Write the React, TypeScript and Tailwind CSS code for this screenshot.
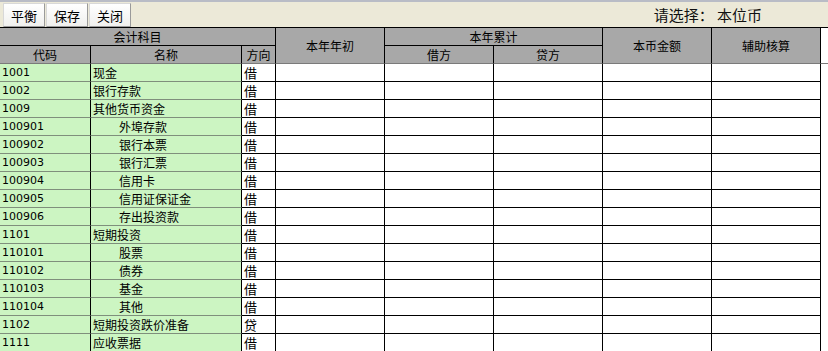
import React from "react";

interface Row {
  code: string;
  name: string;
  dir: string;
  sub?: boolean;
}

const rows: Row[] = [
  { code: "1001", name: "现金", dir: "借" },
  { code: "1002", name: "银行存款", dir: "借" },
  { code: "1009", name: "其他货币资金", dir: "借" },
  { code: "100901", name: "外埠存款", dir: "借", sub: true },
  { code: "100902", name: "银行本票", dir: "借", sub: true },
  { code: "100903", name: "银行汇票", dir: "借", sub: true },
  { code: "100904", name: "信用卡", dir: "借", sub: true },
  { code: "100905", name: "信用证保证金", dir: "借", sub: true },
  { code: "100906", name: "存出投资款", dir: "借", sub: true },
  { code: "1101", name: "短期投资", dir: "借" },
  { code: "110101", name: "股票", dir: "借", sub: true },
  { code: "110102", name: "债券", dir: "借", sub: true },
  { code: "110103", name: "基金", dir: "借", sub: true },
  { code: "110104", name: "其他", dir: "借", sub: true },
  { code: "1102", name: "短期投资跌价准备", dir: "贷" },
  { code: "1111", name: "应收票据", dir: "借" },
];

const cjk = "font-['Noto_Sans_CJK_SC',sans-serif]";
const cols = "grid grid-cols-[91px_151px_34px_109px_109px_109px_109px_109px]";

const ToolButton = ({ label }: { label: string }) => (
  <button className="h-6 w-[42px] border border-[#9a9a9a] border-t-[#d8d8d8] border-l-[#d8d8d8] bg-gradient-to-b from-white to-[#f0f0ee] text-[13px] leading-none text-black">
    {label}
  </button>
);

export default function App() {
  return (
    <div className={`w-[828px] h-[351px] overflow-hidden bg-white ${cjk}`}>
      {/* top strip */}
      <div className="h-[2px] bg-[#b9bcc6]" />

      {/* toolbar */}
      <div className="h-[25px] bg-[#ece9d8] flex items-start pl-[3px] pt-px">
        <div className="flex gap-px">
          <ToolButton label="平衡" />
          <ToolButton label="保存" />
          <ToolButton label="关闭" />
        </div>
        <div className="ml-auto mr-[66px] mt-[2px] text-[15px] leading-5 text-[#111]">
          请选择：&nbsp;本位币
        </div>
      </div>

      {/* header */}
      <div className="flex border-t border-black">
        <div className={`${cols} grid-rows-[18px_18px] bg-[#a8a8a8] text-[12px] text-black`}>
          <div className="col-span-3 border-r border-b border-black flex items-center justify-center leading-none">
            会计科目
          </div>
          <div className="row-span-2 border-r border-b border-b-[#7a7a7a] border-r-black flex items-center justify-center leading-none">
            本年年初
          </div>
          <div className="col-span-2 border-r border-b border-black flex items-center justify-center leading-none">
            本年累计
          </div>
          <div className="row-span-2 border-r border-b border-b-[#7a7a7a] border-r-black flex items-center justify-center leading-none">
            本币金额
          </div>
          <div className="row-span-2 border-r border-b border-b-[#7a7a7a] border-r-black flex items-center justify-center leading-none">
            辅助核算
          </div>
          <div className="border-r border-b border-r-black border-b-[#7a7a7a] flex items-center justify-center leading-none">
            代码
          </div>
          <div className="border-r border-b border-r-black border-b-[#7a7a7a] flex items-center justify-center leading-none">
            名称
          </div>
          <div className="border-r border-b border-r-black border-b-[#7a7a7a] flex items-center justify-center leading-none">
            方向
          </div>
          <div className="border-r border-b border-r-black border-b-[#7a7a7a] flex items-center justify-center leading-none">
            借方
          </div>
          <div className="border-r border-b border-r-black border-b-[#7a7a7a] flex items-center justify-center leading-none">
            贷方
          </div>
        </div>
        <div className="flex-1 border-b border-[#7a7a7a]" />
      </div>

      {/* body */}
      <div className="w-[821px]">
        {rows.map((r) => (
          <div key={r.code} className={`${cols} h-[18px] text-[12px] leading-none`}>
            <div className="bg-[#ccf5c2] border-r border-b border-r-black border-b-[#7f8f7c] flex items-center pl-[2px] font-['DejaVu_Sans',sans-serif] text-[11px] text-black">
              {r.code}
            </div>
            <div
              className={`bg-[#ccf5c2] border-r border-b border-r-black border-b-[#7f8f7c] flex items-center text-black ${
                r.sub ? "pl-[28px]" : "pl-[2px]"
              }`}
            >
              {r.name}
            </div>
            <div className="bg-white border-r border-b border-black flex items-center pl-[2px] text-[13px] text-black">
              {r.dir}
            </div>
            <div className="border-r border-b border-black" />
            <div className="border-r border-b border-black" />
            <div className="border-r border-b border-black" />
            <div className="border-r border-b border-black" />
            <div className="border-r border-b border-black" />
          </div>
        ))}
      </div>
    </div>
  );
}
